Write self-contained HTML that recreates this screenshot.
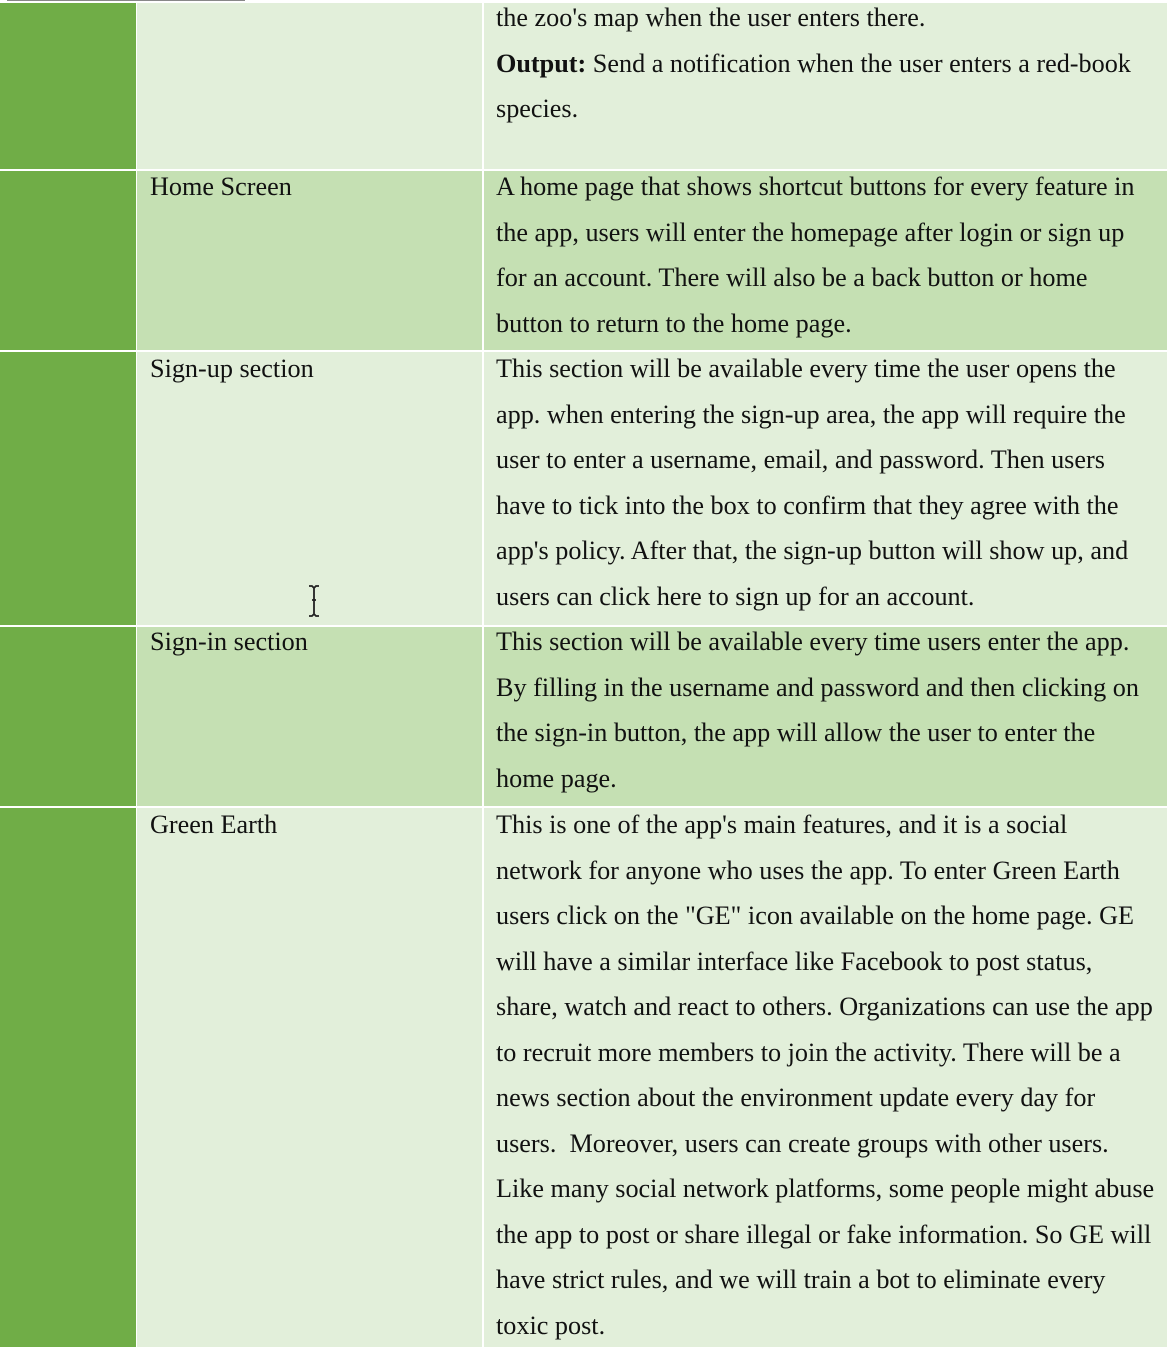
<!DOCTYPE html>
<html><head><meta charset="utf-8"><style>
body{margin:0;width:1167px;height:1347px;position:relative;background:#fff;overflow:hidden;font-family:"Liberation Serif",serif;font-size:26.2px;color:#111;}
.b{position:absolute}
.t{position:absolute;line-height:45.5px;white-space:nowrap}
.d{background:#70AD47}.l{background:#E2EFDA}.m{background:#C5E0B3}
</style></head><body>
<div class="b" style="left:7px;top:0;width:238px;height:1px;background:#888"></div>
<div class="b d" style="left:0;top:3px;width:136px;height:166px"></div>
<div class="b l" style="left:137px;top:3px;width:345px;height:166px"></div>
<div class="b l" style="left:484px;top:3px;width:683px;height:166px"></div>
<div class="b d" style="left:0;top:171px;width:136px;height:179px"></div>
<div class="b m" style="left:137px;top:171px;width:345px;height:179px"></div>
<div class="b m" style="left:484px;top:171px;width:683px;height:179px"></div>
<div class="b d" style="left:0;top:352px;width:136px;height:273px"></div>
<div class="b l" style="left:137px;top:352px;width:345px;height:273px"></div>
<div class="b l" style="left:484px;top:352px;width:683px;height:273px"></div>
<div class="b d" style="left:0;top:627px;width:136px;height:179px"></div>
<div class="b m" style="left:137px;top:627px;width:345px;height:179px"></div>
<div class="b m" style="left:484px;top:627px;width:683px;height:179px"></div>
<div class="b d" style="left:0;top:808px;width:136px;height:539px"></div>
<div class="b l" style="left:137px;top:808px;width:345px;height:539px"></div>
<div class="b l" style="left:484px;top:808px;width:683px;height:539px"></div>

<div class="t" style="left:496px;top:-5px">the zoo's map when the user enters there.<br><b>Output:</b> Send a notification when the user enters a red-book<br>species.</div>

<div class="t" style="left:150px;top:164px">Home Screen</div>
<div class="t" style="left:496px;top:164px">A home page that shows shortcut buttons for every feature in<br>the app, users will enter the homepage after login or sign up<br>for an account. There will also be a back button or home<br>button to return to the home page.</div>

<div class="t" style="left:150px;top:346px">Sign-up section</div>
<div class="t" style="left:496px;top:346px">This section will be available every time the user opens the<br>app. when entering the sign-up area, the app will require the<br>user to enter a username, email, and password. Then users<br>have to tick into the box to confirm that they agree with the<br>app's policy. After that, the sign-up button will show up, and<br>users can click here to sign up for an account.</div>
<svg class="b" style="left:306px;top:584px" width="16" height="34" viewBox="0 0 16 34"><path d="M3 2h3l2 2 2-2h3M8 4v26M3 32h3l2-2 2 2h3M6 16h4" stroke="#222" stroke-width="1.8" fill="none"/></svg>

<div class="t" style="left:150px;top:619px">Sign-in section</div>
<div class="t" style="left:496px;top:619px">This section will be available every time users enter the app.<br>By filling in the username and password and then clicking on<br>the sign-in button, the app will allow the user to enter the<br>home page.</div>

<div class="t" style="left:150px;top:802px">Green Earth</div>
<div class="t" style="left:496px;top:802px">This is one of the app's main features, and it is a social<br>network for anyone who uses the app. To enter Green Earth<br>users click on the "GE" icon available on the home page. GE<br>will have a similar interface like Facebook to post status,<br>share, watch and react to others. Organizations can use the app<br>to recruit more members to join the activity. There will be a<br>news section about the environment update every day for<br>users.&nbsp; Moreover, users can create groups with other users.<br>Like many social network platforms, some people might abuse<br>the app to post or share illegal or fake information. So GE will<br>have strict rules, and we will train a bot to eliminate every<br>toxic post.</div>
</body></html>
